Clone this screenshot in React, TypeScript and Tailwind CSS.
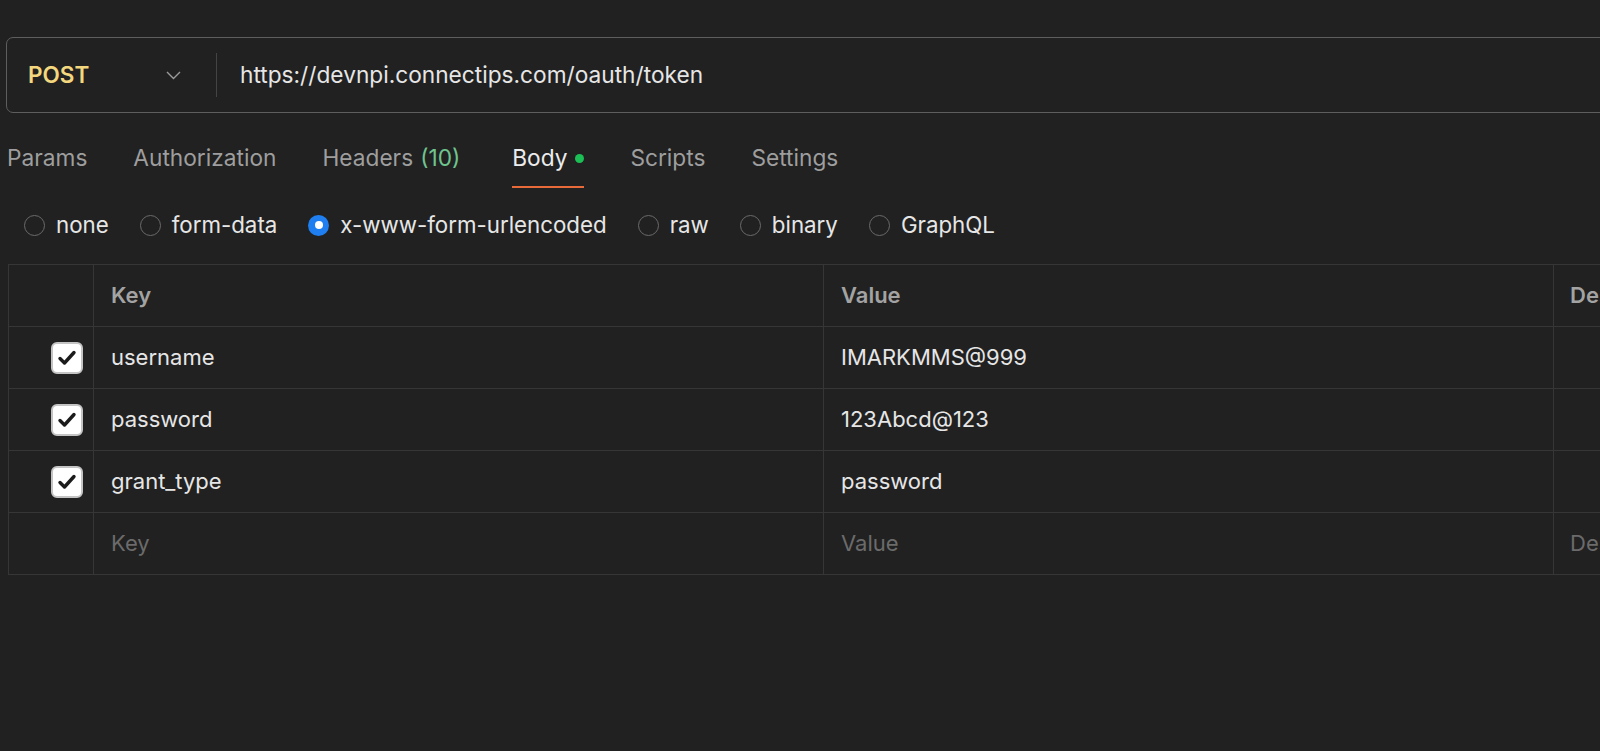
import React from 'react'

const tabs = [
  { id: 'params', label: 'Params' },
  { id: 'auth', label: 'Authorization' },
  { id: 'headers', label: 'Headers', count: '(10)' },
  { id: 'body', label: 'Body', dot: true },
  { id: 'scripts', label: 'Scripts' },
  { id: 'settings', label: 'Settings' },
]

const bodyTypes = ['none', 'form-data', 'x-www-form-urlencoded', 'raw', 'binary', 'GraphQL']

const rows = [
  { key: 'username', value: 'IMARKMMS@999' },
  { key: 'password', value: '123Abcd@123' },
  { key: 'grant_type', value: 'password' },
]

function Checkbox() {
  return (
    <div className="flex h-[32px] w-[32px] items-center justify-center rounded-[6px] border-2 border-[#c4c4c4] bg-white">
      <svg width="22" height="22" viewBox="0 0 22 22" fill="none">
        <path d="M4 11.5 L8.5 16 L18 5.5" stroke="#1b1b1b" strokeWidth="3.4" strokeLinecap="round" strokeLinejoin="round" />
      </svg>
    </div>
  )
}

function Radio({ checked }: { checked?: boolean }) {
  if (checked) {
    return (
      <span className="flex h-[21px] w-[21px] items-center justify-center rounded-full bg-[#1f7ff0]">
        <span className="h-[8px] w-[8px] rounded-full bg-white" />
      </span>
    )
  }
  return <span className="h-[21px] w-[21px] rounded-full border-[1.5px] border-[#6a6a6a]" />
}

function Cell({ children, className = '' }: { children?: React.ReactNode; className?: string }) {
  return (
    <div className={`flex h-[62px] items-center border-b border-r border-[#363636] ${className}`}>{children}</div>
  )
}

export default function App() {
  return (
    <div className="min-h-screen w-full overflow-hidden bg-[#212121] font-['Inter','Noto_Sans',sans-serif] text-[22px]">
      <div className="pl-[6px] pt-[37px]">
        {/* request url bar */}
        <div className="flex h-[76px] w-[1660px] items-center rounded-[7px] border border-[#5e5e5e]">
          <div className="flex w-[209px] items-center justify-between pl-[21px] pr-[35px]">
            <span className="text-[22.5px] font-semibold text-[#f3d77e]">POST</span>
            <svg width="15" height="9" viewBox="0 0 15 9" fill="none">
              <path d="M1 1 L7.5 7.5 L14 1" stroke="#9a9a9a" strokeWidth="1.4" />
            </svg>
          </div>
          <div className="h-[44px] w-px bg-[#444444]" />
          <span className="pl-[23px] text-[22.7px] text-[#e6e6e6]">https://devnpi.connectips.com/oauth/token</span>
        </div>
      </div>

      {/* tabs */}
      <div className="mt-[28px] flex gap-[46px] pl-[7px] text-[22.7px]">
        {tabs.map((t) => (
          <div
            key={t.id}
            className={`flex h-[47px] items-start border-b-2 leading-[34px] ${
              t.id === 'body' ? 'ml-[6px] border-[#e8693a] text-[#ececec]' : 'border-transparent text-[#9e9e9e]'
            }`}
          >
            <span>{t.label}</span>
            {t.count && <span className="ml-[7px] text-[#6fc48f]">{t.count}</span>}
            {t.dot && <span className="ml-[8px] mt-[13px] h-[9px] w-[9px] rounded-full bg-[#1cbf55]" />}
          </div>
        ))}
      </div>

      {/* body types */}
      <div className="mt-[22px] flex h-[30px] items-center gap-[31px] pl-[24px] text-[22.3px]">
        {bodyTypes.map((b) => (
          <div key={b} className="flex items-center gap-[11px]">
            <Radio checked={b === 'x-www-form-urlencoded'} />
            <span className="text-[#e6e6e6]">{b}</span>
          </div>
        ))}
      </div>

      {/* table */}
      <div className="ml-[8px] mt-[24px] w-[1700px] border-l border-t border-[#363636]">
        <div className="grid grid-cols-[85px_730px_730px_1fr]">
          <Cell />
          <Cell className="pl-[17px] font-semibold text-[#a3a3a3]">Key</Cell>
          <Cell className="pl-[17px] font-semibold text-[#a3a3a3]">Value</Cell>
          <Cell className="pl-[16px] font-semibold text-[#a3a3a3]">Description</Cell>

          {rows.map((r) => (
            <React.Fragment key={r.key}>
              <Cell className="justify-end pr-[10px]">
                <Checkbox />
              </Cell>
              <Cell className="pl-[17px] text-[#e6e6e6]">{r.key}</Cell>
              <Cell className="pl-[17px] text-[#e6e6e6]">{r.value}</Cell>
              <Cell />
            </React.Fragment>
          ))}

          <Cell />
          <Cell className="pl-[17px] text-[#6b6b6b]">Key</Cell>
          <Cell className="pl-[17px] text-[#6b6b6b]">Value</Cell>
          <Cell className="pl-[16px] text-[#6b6b6b]">Description</Cell>
        </div>
      </div>
    </div>
  )
}
